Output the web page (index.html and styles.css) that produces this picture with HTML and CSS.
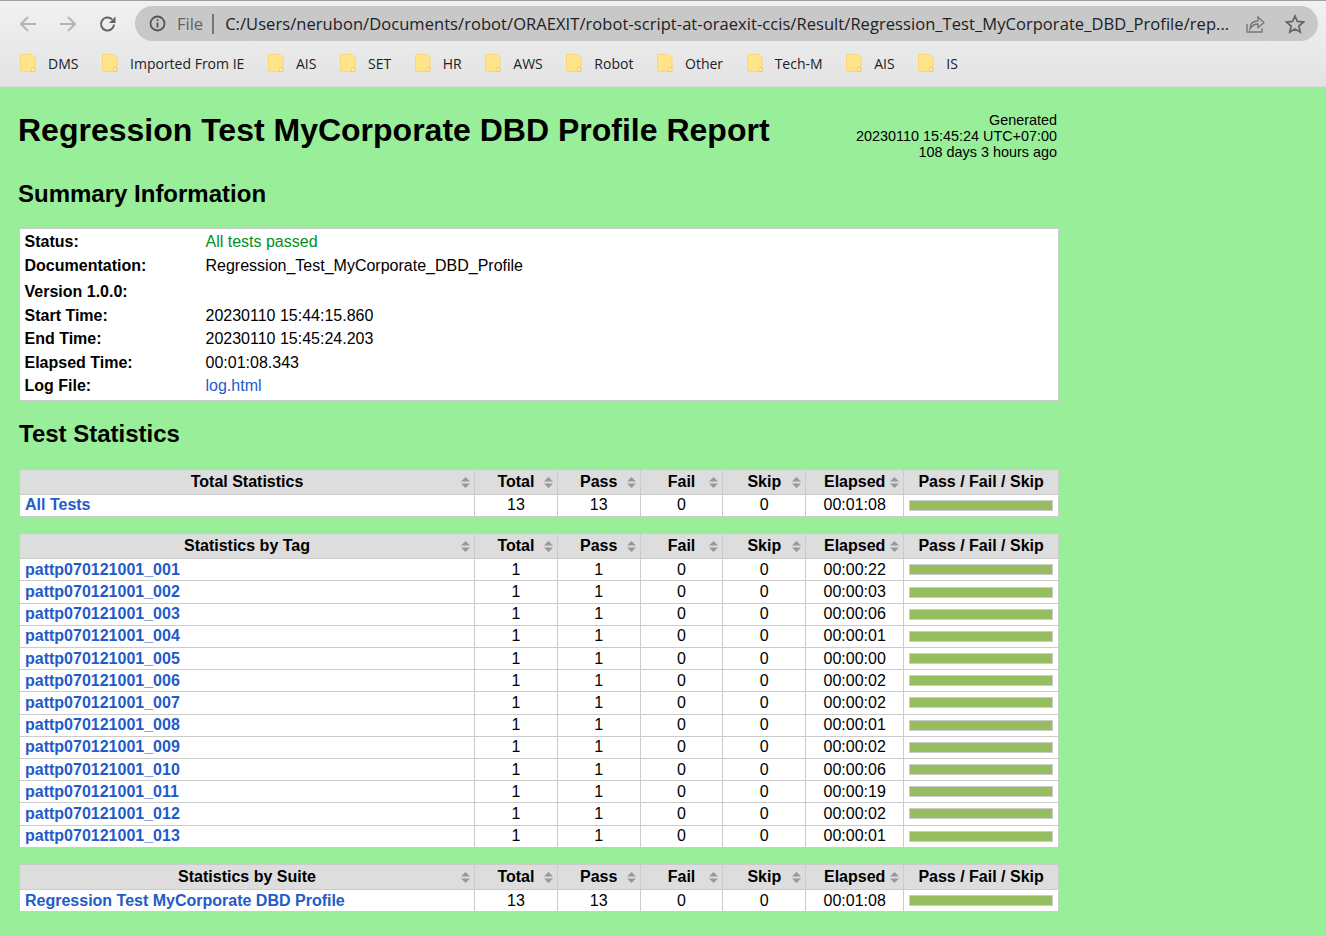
FILE: index.html
```html
<!DOCTYPE html>
<html lang="en">
<head>
  <meta charset="UTF-8">
  <title>Regression Test MyCorporate DBD Profile Report</title>
  <link rel="stylesheet" href="styles.css">
</head>
<body>
  <svg class="defs" width="0" height="0">
    <symbol id="folder" viewBox="0 0 16 18">
      <path d="M1 .5h10.500l3.500 3V16a1.500 1.500 0 0 1-1.500 1.500H2A1.500 1.500 0 0 1 .5 16V1.500A1 1 0 0 1 1 .5z" fill="#ffe48c" stroke="#f6d877"/>
      <rect x="11.500" y="13.500" width="3.500" height="4" rx="1" fill="#ffeaa6" stroke="#eec95c"/>
    </symbol>
    <symbol id="sort" viewBox="0 0 9 11">
      <path d="M4.500 0l4.500 4.600H0zM4.500 11l4.500-4.600H0z"/>
    </symbol>
  </svg>

  <div class="browser">
    <div class="toolbar">
      <svg class="nav-icon" width="20" height="20" viewBox="0 0 20 20"><path d="M18 10H3M10 3l-7 7 7 7" fill="none" stroke="#b4b4b4" stroke-width="2"/></svg>
      <svg class="nav-icon" width="20" height="20" viewBox="0 0 20 20"><path d="M2 10h15M10 3l7 7-7 7" fill="none" stroke="#b4b4b4" stroke-width="2"/></svg>
      <svg class="nav-icon" width="20" height="20" viewBox="0 0 20 20"><path d="M16 10.500a6.500 6.500 0 1 1-2-5.200" fill="none" stroke="#5f6368" stroke-width="2"/><path d="M17.500 2.500v6.500h-6.500z" fill="#5f6368"/></svg>
      <div class="omnibox">
        <svg width="17" height="17" viewBox="0 0 17 17"><circle cx="8.500" cy="8.500" r="7" fill="none" stroke="#555" stroke-width="1.800"/><path d="M7.600 7.500h1.800v5H7.600zM7.600 4.300h1.800v1.800H7.600z" fill="#555"/></svg>
        <span class="scheme">File</span>
        <span class="divider"></span>
        <span class="url">C:/Users/nerubon/Documents/robot/ORAEXIT/robot-script-at-oraexit-ccis/Result/Regression_Test_MyCorporate_DBD_Profile/rep...</span>
        <svg class="share" width="20" height="20" viewBox="0 0 20 20"><path d="M2 10v8h15v-4" fill="none" stroke="#777" stroke-width="1.400"/><path d="M5 15c0-5 3-8 8-8V3l6 5.500-6 5V10c-4 0-6 1.500-8 5z" fill="none" stroke="#777" stroke-width="1.400"/></svg>
        <svg class="star" width="20" height="20" viewBox="0 0 20 20"><path d="M10 2l2.400 5.500 6 .6-4.500 4 1.300 5.900L10 15l-5.200 3 1.300-5.900-4.500-4 6-.6z" fill="none" stroke="#666" stroke-width="1.800"/></svg>
      </div>
    </div>
    <div class="bookmarks">
      <a class="bookmark"><svg width="16" height="18"><use href="#folder"/></svg>DMS</a>
      <a class="bookmark"><svg width="16" height="18"><use href="#folder"/></svg>Imported From IE</a>
      <a class="bookmark"><svg width="16" height="18"><use href="#folder"/></svg>AIS</a>
      <a class="bookmark"><svg width="16" height="18"><use href="#folder"/></svg>SET</a>
      <a class="bookmark"><svg width="16" height="18"><use href="#folder"/></svg>HR</a>
      <a class="bookmark"><svg width="16" height="18"><use href="#folder"/></svg>AWS</a>
      <a class="bookmark"><svg width="16" height="18"><use href="#folder"/></svg>Robot</a>
      <a class="bookmark"><svg width="16" height="18"><use href="#folder"/></svg>Other</a>
      <a class="bookmark"><svg width="16" height="18"><use href="#folder"/></svg>Tech-M</a>
      <a class="bookmark"><svg width="16" height="18"><use href="#folder"/></svg>AIS</a>
      <a class="bookmark"><svg width="16" height="18"><use href="#folder"/></svg>IS</a>
    </div>
  </div>

  <div class="report">
    <div class="header">
      <h1>Regression Test MyCorporate DBD Profile Report</h1>
      <div class="generated">Generated<br>20230110 15:45:24 UTC+07:00<br>108 days 3 hours ago</div>
    </div>

    <h2 class="summary-title">Summary Information</h2>
    <table class="details">
      <tr><th>Status:</th><td class="pass">All tests passed</td></tr>
      <tr class="flush tall"><th>Documentation:</th><td>Regression_Test_MyCorporate_DBD_Profile</td></tr>
      <tr class="wide"><th>Version 1.0.0:</th><td></td></tr>
      <tr><th>Start Time:</th><td>20230110 15:44:15.860</td></tr>
      <tr class="flush"><th>End Time:</th><td>20230110 15:45:24.203</td></tr>
      <tr><th>Elapsed Time:</th><td>00:01:08.343</td></tr>
      <tr class="last"><th>Log File:</th><td><a href="#">log.html</a></td></tr>
    </table>

    <h2 class="stats-title">Test Statistics</h2>
    <div id="stats"></div>
  </div>

  <script>
    var tagRows = [
      ["pattp070121001_001", 1, 1, "00:00:22"],
      ["pattp070121001_002", 1, 1, "00:00:03"],
      ["pattp070121001_003", 1, 1, "00:00:06"],
      ["pattp070121001_004", 1, 1, "00:00:01"],
      ["pattp070121001_005", 1, 1, "00:00:00"],
      ["pattp070121001_006", 1, 1, "00:00:02"],
      ["pattp070121001_007", 1, 1, "00:00:02"],
      ["pattp070121001_008", 1, 1, "00:00:01"],
      ["pattp070121001_009", 1, 1, "00:00:02"],
      ["pattp070121001_010", 1, 1, "00:00:06"],
      ["pattp070121001_011", 1, 1, "00:00:19"],
      ["pattp070121001_012", 1, 1, "00:00:02"],
      ["pattp070121001_013", 1, 1, "00:00:01"]
    ];

    function sortIcon() {
      return '<svg class="sort"><use href="#sort"/></svg>';
    }

    function buildTable(title, rows) {
      var html = '<table class="statistics"><thead><tr>';
      html += '<th class="col-name">' + title + sortIcon() + '</th>';
      ["Total", "Pass", "Fail", "Skip"].forEach(function (name) {
        html += '<th class="col-num">' + name + sortIcon() + '</th>';
      });
      html += '<th class="col-elapsed">Elapsed' + sortIcon() + '</th>';
      html += '<th class="col-graph">Pass / Fail / Skip</th></tr></thead><tbody>';
      rows.forEach(function (r) {
        html += '<tr><td class="name"><a href="#">' + r[0] + '</a></td>';
        html += '<td class="num">' + r[1] + '</td><td class="num">' + r[2] + '</td>';
        html += '<td class="num">0</td><td class="num">0</td>';
        html += '<td class="num">' + r[3] + '</td>';
        html += '<td class="graph-cell"><div class="graph"><div class="pass-bar"></div></div></td></tr>';
      });
      return html + '</tbody></table>';
    }

    document.getElementById("stats").innerHTML =
      buildTable("Total Statistics", [["All Tests", 13, 13, "00:01:08"]]) +
      buildTable("Statistics by Tag", tagRows) +
      buildTable("Statistics by Suite", [["Regression Test MyCorporate DBD Profile", 13, 13, "00:01:08"]]);
  </script>
</body>
</html>
```

FILE: styles.css
```css
html, body {
  margin: 0;
  padding: 0;
  height: 100%;
}

body {
  font-family: "Liberation Sans", Arial, sans-serif;
  font-size: 16px;
  color: #000;
  background: #99ef99;
  overflow: hidden;
}

.defs {
  position: absolute;
}

.browser {
  height: 85px;
  border-top: 1px solid #a0a0a0;
  border-bottom: 1px solid #d8d8d8;
  background: linear-gradient(#f1f1f1, #e3e3e3);
  font-family: "Open Sans", sans-serif;
}

.toolbar {
  display: flex;
  align-items: center;
  height: 45px;
  padding: 0 8px 0 18px;
}

.nav-icon {
  margin-right: 20px;
}

.toolbar .nav-icon:nth-child(3) {
  margin-right: 17px;
}

.omnibox {
  flex: 1;
  display: flex;
  align-items: center;
  height: 35px;
  padding: 0 13px 0 14px;
  border-radius: 18px;
  background: #c8c8c8;
}

.scheme {
  margin-left: 11px;
  font-size: 16.500px;
  color: #5f6368;
}

.divider {
  width: 2px;
  height: 20px;
  margin: 0 11px 0 9px;
  background: #777;
}

.url {
  flex: 1;
  font-size: 16.500px;
  letter-spacing: 0.06px;
  color: #202124;
  white-space: nowrap;
}

.share {
  margin-right: 20px;
}

.bookmarks {
  display: flex;
  align-items: center;
  height: 32px;
  margin-top: 1px;
  padding-left: 20px;
  font-size: 14px;
  color: #202124;
}

.bookmark {
  display: flex;
  align-items: center;
  margin-right: 23.600px;
}

.bookmark svg {
  margin-right: 12px;
}

.report {
  width: 1040px;
  padding: 0 0 0 19px;
}

.header {
  display: flex;
  justify-content: space-between;
  align-items: flex-start;
  height: 73px;
  padding-top: 25px;
}

h1 {
  margin: 0 0 0 -1px;
  font-size: 32px;
  line-height: 37px;
}

.generated {
  font-size: 14.400px;
  line-height: 16px;
  text-align: right;
  margin-right: 2px;
}

h2 {
  margin: 0;
  font-size: 24px;
  line-height: 28px;
}

.summary-title {
  margin-left: -1px;
  margin-top: -5px;
}

.details {
  width: 1040px;
  margin-top: 20px;
  border-collapse: collapse;
  background: #fff;
  border: 1px solid #ccc;
}

.details th,
.details td {
  height: 22px;
  padding: 2px 0 0 6px;
}

.details th {
  width: 175px;
  padding-left: 4.500px;
  font-weight: bold;
  text-align: left;
}

.details .wide th {
  height: 23px;
}

.details .flush th,
.details .flush td {
  height: 23px;
  padding-top: 0;
}

.details .flush.tall th {
  height: 25px;
}

.details .last th,
.details .last td {
  height: 23px;
  padding-top: 3px;
  vertical-align: top;
}

.details .pass {
  color: #009020;
}

.details a,
.statistics a {
  color: #1f5bc9;
  text-decoration: none;
}

.stats-title {
  margin-top: 19px;
}

.statistics {
  table-layout: fixed;
  width: 1040px;
  margin-top: 21px;
  border-collapse: collapse;
  background: #fff;
}

.statistics + .statistics {
  margin-top: 16.400px;
}

.statistics th,
.statistics td {
  border: 1px solid #ccc;
  padding: 0 5px;
  white-space: nowrap;
  overflow: hidden;
}

.statistics th {
  position: relative;
  height: 24.100px;
  background: #ddd;
  font-weight: bold;
}

.statistics:first-child th {
  height: 23.600px;
}

.statistics td {
  height: 21.200px;
}

.col-name {
  width: 444px;
}

.col-num {
  width: 71.800px;
}

.col-elapsed {
  width: 87px;
}

.sort {
  position: absolute;
  right: 4px;
  top: 7px;
  width: 9px;
  height: 11px;
  fill: #999;
}

.name a {
  font-weight: bold;
}

.num {
  text-align: center;
}

.graph {
  height: 9px;
  border: 1px solid #ccc;
}

.pass-bar {
  height: 100%;
  background: #97bd61;
}
```
